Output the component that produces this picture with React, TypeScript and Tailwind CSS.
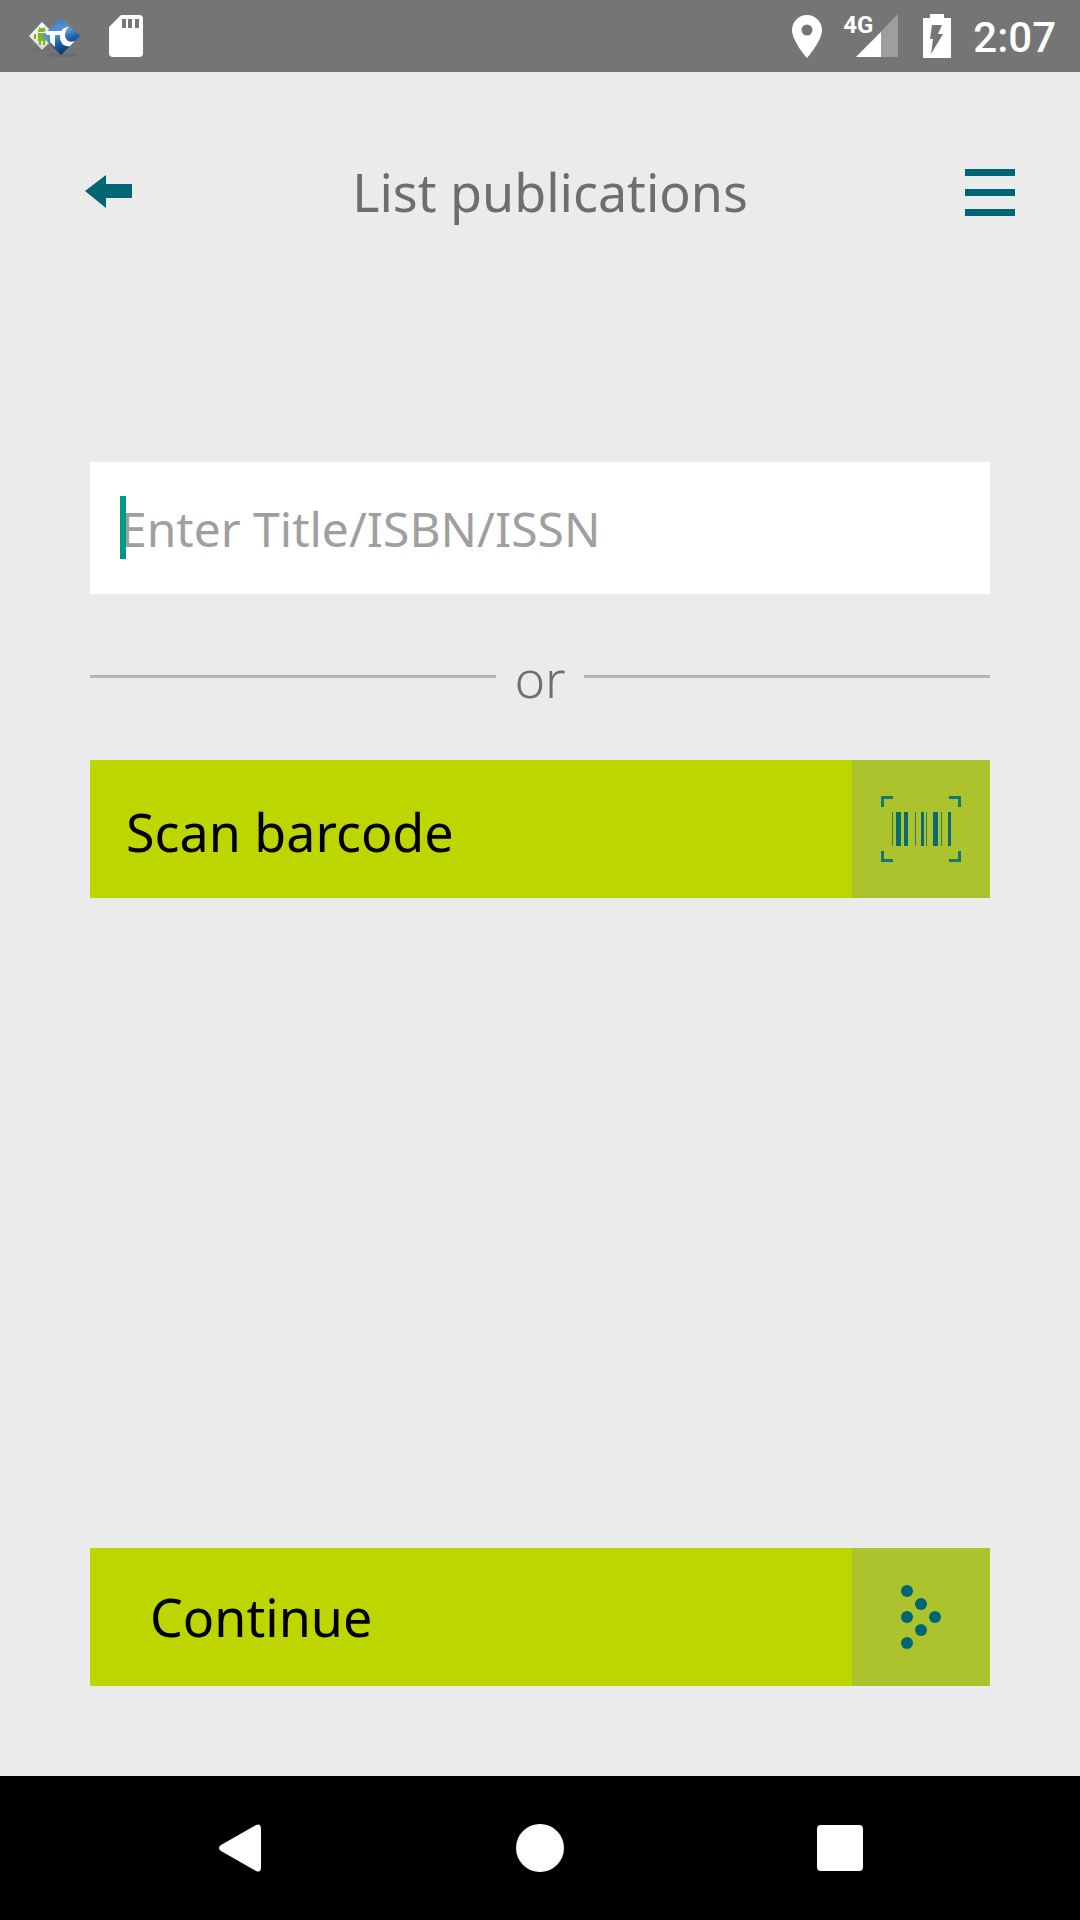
import type { ReactNode } from "react";

function AppBadge() {
  return (
    <svg width="56" height="44" viewBox="0 0 56 44" aria-hidden="true">
      <defs>
        <linearGradient id="blue" x1="0.2" y1="0" x2="0.6" y2="1">
          <stop offset="0" stopColor="#2f7bc8" />
          <stop offset="0.45" stopColor="#5f96d2" />
          <stop offset="0.65" stopColor="#1c62ad" />
          <stop offset="1" stopColor="#06305f" />
        </linearGradient>
        <linearGradient id="pale" x1="0" y1="0" x2="0" y2="1">
          <stop offset="0" stopColor="#ffffff" />
          <stop offset="1" stopColor="#d3d8d0" />
        </linearGradient>
      </defs>
      <ellipse cx="34" cy="41" rx="16" ry="2" fill="#6c6c6c" />
      <ellipse cx="14" cy="35" rx="9" ry="2" fill="#6e6e6e" />
      <path d="M14 8 28 22 14 36 1 22Z" fill="url(#pale)" />
      <g fill="#82b521">
        <path d="M10 18a4 4 0 0 1 8 0ZM10 19h8v8H10ZM11 27h2v4h-2ZM15 27h2v4h-2ZM6 20h2v5H6Z" />
        <path d="M11 13l1 2M17 13l-1 2" stroke="#82b521" />
      </g>
      <path d="M33 4 52 22 33 41 14 22Z" fill="url(#blue)" />
      <path d="M16 17h17v4h-6v12l-5-5v-7h-3Z" fill="#fff" />
      <path d="M41 13c-6 0-9 4-9 10 0 7 5 10 10 9l5-5c-5 2-9 0-10-5 0-4 1-7 4-9Z" fill="#fff" />
    </svg>
  );
}

function StatusBar() {
  return (
    <div className="flex h-[72px] items-center justify-between bg-[#757575] pr-6 pl-7 text-white">
      <div className="flex items-center gap-6">
        <AppBadge />
        <svg width="36" height="44" viewBox="0 0 36 44" aria-hidden="true">
          <path d="M13 1h18a4 4 0 0 1 4 4v34a4 4 0 0 1-4 4H5a4 4 0 0 1-4-4V13Z" fill="#fff" />
          <path d="M14 5h4v9h-4ZM20 5h4v9h-4ZM27 5h4v9h-4Z" fill="#757575" />
        </svg>
      </div>
      <div className="flex items-center">
        <svg width="32" height="44" viewBox="0 0 32 44" className="mr-5" aria-hidden="true">
          <path d="M16 1A15 15 0 0 0 1 16c0 11 15 28 15 28s15-17 15-28A15 15 0 0 0 16 1Zm0 20.500a5.500 5.500 0 1 1 0-11 5.500 5.500 0 0 1 0 11Z" fill="#fff" />
        </svg>
        <div className="relative mr-6 h-11 w-[55px]">
          <svg width="55" height="44" viewBox="0 0 55 44" aria-hidden="true">
            <path d="M55 0v43H13Z" fill="#9e9e9e" />
            <path d="M38 18v25H13Z" fill="#fff" />
          </svg>
          <span className="absolute top-0 left-0 font-[Roboto] text-2xl leading-[22px] font-bold">4G</span>
        </div>
        <svg width="30" height="44" viewBox="0 0 30 44" className="mr-[21px]" aria-hidden="true">
          <path d="M8 0h14v4h7v40H1V4h7Z" fill="#fff" />
          <path d="M10 11h10l-4 9h5L9 40l2-15H8Z" fill="#757575" />
        </svg>
        <span className="pt-[3px] font-[Roboto] text-[42px] leading-[44px] font-medium">2:07</span>
      </div>
    </div>
  );
}

function ActionButton({ label, inset, children }: { label: string; inset: string; children: ReactNode }) {
  return (
    <button type="button" className="flex h-[138px] w-full items-stretch bg-[#bed600] text-left text-black">
      <span className={`flex flex-1 items-center text-[52px] leading-[72px] ${inset}`}>{label}</span>
      <span className="flex w-[138px] items-center justify-center bg-[#acc32d]">{children}</span>
    </button>
  );
}

function BarcodeIcon() {
  return (
    <svg width="80" height="66" viewBox="0 0 80 66" aria-hidden="true">
      <path d="M1.500 11V1.500H12M68 1.500h10.500V11M1.500 55v9.500H12M68 64.500h10.500V55" fill="none" stroke="#167872" strokeWidth="3" />
      <g fill="#0a6c72">
        <path d="M15 16h5v34h-5ZM23 16h4v34h-4ZM40 16h3v34h-3ZM52 16h5v34h-5ZM67 16h3v34h-3Z" />
        <path d="M11 16h1v34h-1ZM34 16h1v34h-1ZM45 16h1v34h-1ZM60 16h1v34h-1Z" opacity="0.8" />
      </g>
    </svg>
  );
}

function DotsIcon() {
  return (
    <svg width="40" height="66" viewBox="0 0 40 66" fill="#006674" aria-hidden="true">
      <circle cx="6" cy="7" r="6" />
      <circle cx="20" cy="20" r="6" />
      <circle cx="6" cy="33" r="6" />
      <circle cx="34" cy="33" r="6" />
      <circle cx="20" cy="46" r="6" />
      <circle cx="6" cy="59" r="6" />
    </svg>
  );
}

function NavBar() {
  return (
    <nav className="flex h-36 items-center justify-around bg-black px-[90px]">
      <button type="button" aria-label="Back" className="flex h-16 w-16 items-center justify-center">
        <svg width="48" height="48" viewBox="0 0 48 48" fill="#fff" aria-hidden="true">
          <path d="M5 21 40 1q5-2 5 4v38q0 6-5 4L5 27q-4-3 0-6Z" />
        </svg>
      </button>
      <button type="button" aria-label="Home" className="flex h-16 w-16 items-center justify-center">
        <span className="h-12 w-12 rounded-full bg-white" />
      </button>
      <button type="button" aria-label="Recent apps" className="flex h-16 w-16 items-center justify-center">
        <span className="h-[46px] w-[46px] rounded-sm bg-white" />
      </button>
    </nav>
  );
}

export default function App() {
  return (
    <div className="flex min-h-screen flex-col bg-[#ebebeb] font-['Noto_Sans',sans-serif]">
      <StatusBar />
      <header className="flex items-center justify-between pt-[84px] pr-[65px] pl-[85px]">
        <button type="button" aria-label="Go back">
          <svg width="50" height="34" viewBox="0 0 50 34" fill="#006674" aria-hidden="true">
            <path d="M0 16 21 0v9h26v14H21v10Z" />
          </svg>
        </button>
        <h1 className="text-[52px] leading-[72px] text-[#6e6e6e]">List publications</h1>
        <button type="button" aria-label="Menu" className="flex w-[50px] flex-col gap-[13px]">
          <span className="h-[7px] bg-[#006674]" />
          <span className="h-[7px] bg-[#006674]" />
          <span className="h-[7px] bg-[#006674]" />
        </button>
      </header>
      <main className="flex flex-1 flex-col px-[90px] pt-[234px] pb-[90px]">
        <div className="relative">
          <input
            type="text"
            aria-label="Enter Title/ISBN/ISSN"
            placeholder="Enter Title/ISBN/ISSN"
            className="h-[132px] w-full bg-white px-[30px] text-5xl text-[#6e6e6e] outline-none placeholder:text-[#9f9f9f]"
          />
          <span className="absolute top-[34px] left-[30px] h-[63px] w-[6px] bg-[#009688]" />
        </div>
        <div className="mt-[46px] mb-12 flex h-[72px] items-center gap-[18px]">
          <span className="h-[3px] flex-1 bg-[#b5b5b5]" />
          <span className="pt-1 text-[52px] leading-[72px] font-light text-[#6e6e6e]">or</span>
          <span className="h-[3px] flex-1 bg-[#b5b5b5]" />
        </div>
        <ActionButton label="Scan barcode" inset="pt-[6px] pl-9">
          <BarcodeIcon />
        </ActionButton>
        <div className="mt-auto">
          <ActionButton label="Continue" inset="pl-[60px]">
            <DotsIcon />
          </ActionButton>
        </div>
      </main>
      <NavBar />
    </div>
  );
}
